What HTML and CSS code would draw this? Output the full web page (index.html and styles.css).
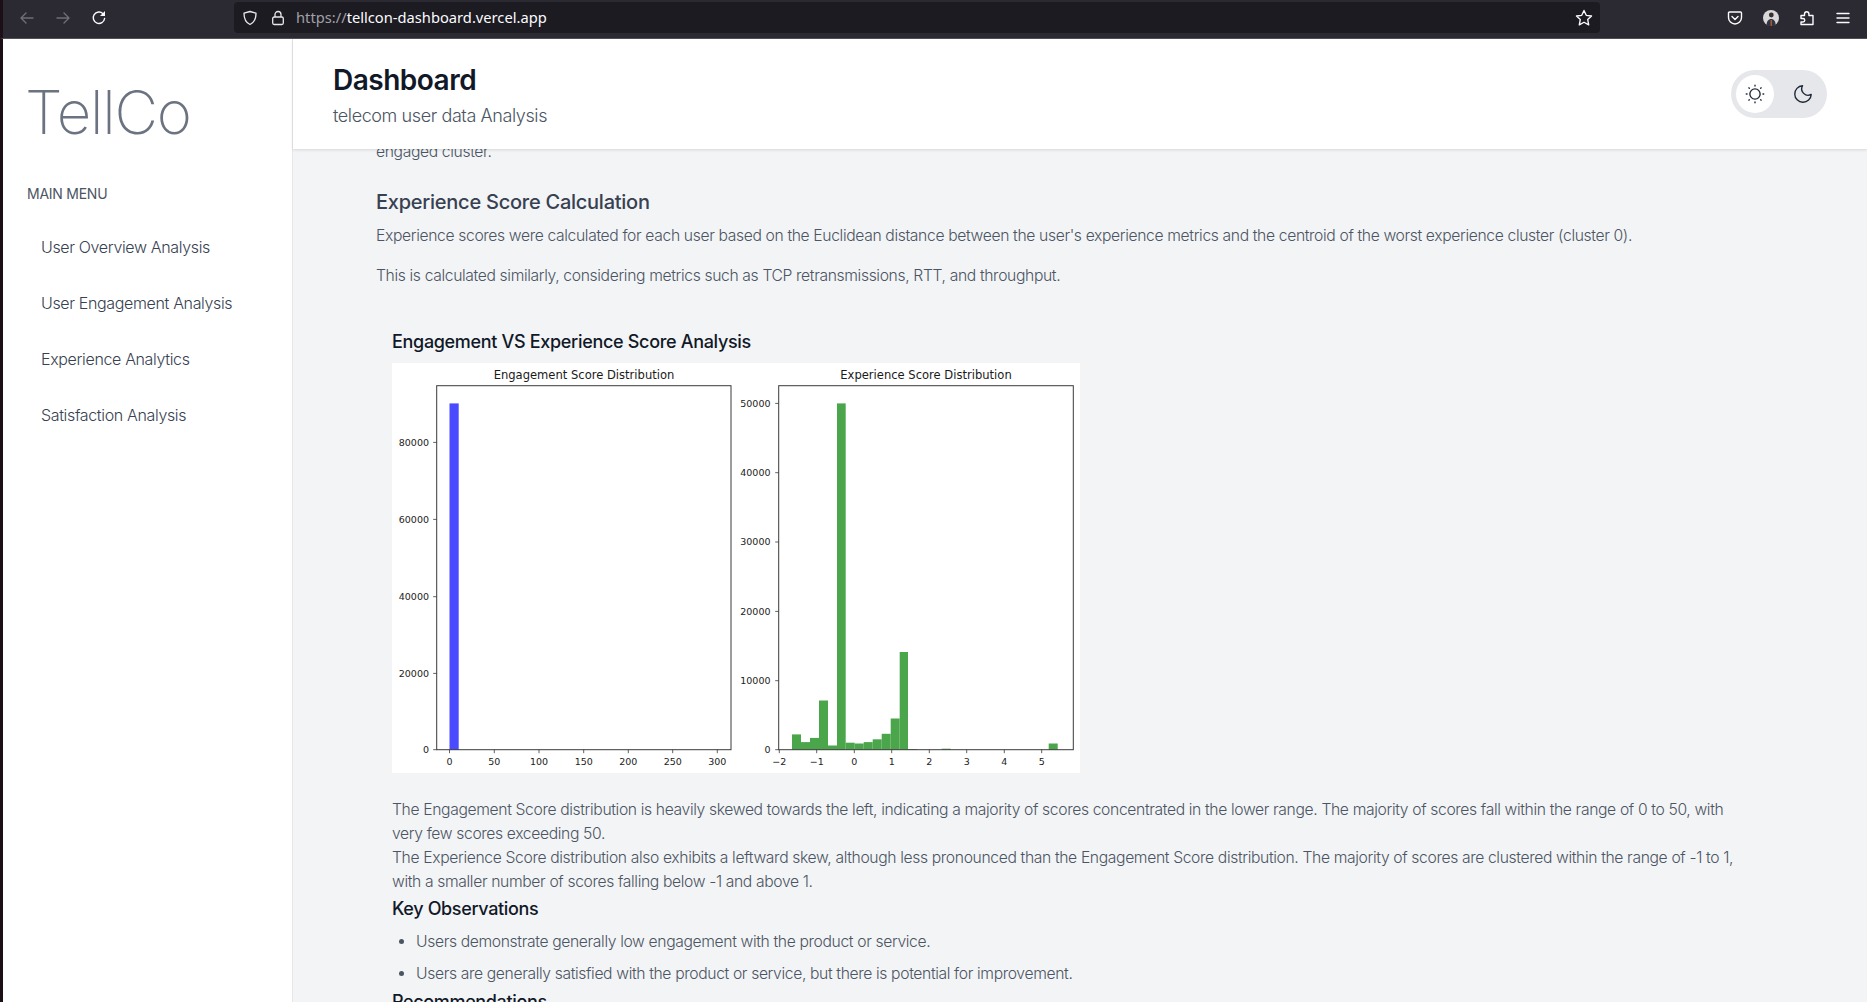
FILE: index.html
```html
<!DOCTYPE html>
<html lang="en">
<head>
<meta charset="utf-8">
<title>TellCo Dashboard</title>
<link rel="stylesheet" href="styles.css">
</head>
<body>
<div class="toolbar">
  <div class="nav-icons">
    <svg class="tb-icon dim" viewBox="0 0 16 16"><path d="M14 8H2.500M7 3 2 8l5 5"/></svg>
    <svg class="tb-icon dim" viewBox="0 0 16 16"><path d="M2 8h11.500M9 3l5 5-5 5"/></svg>
    <svg class="tb-icon" viewBox="0 0 16 16"><path d="M13.600 8.500A5.700 5.700 0 1 1 12 3.700"/><path class="solid" d="M14 1v5H9z"/></svg>
  </div>
  <div class="urlbar">
    <svg class="url-icon" viewBox="0 0 16 16"><path d="M8 1.500 14 3.200c0 5.500-1.600 9.300-6 11.300C3.600 12.500 2 8.700 2 3.200z"/></svg>
    <svg class="url-icon" viewBox="0 0 16 16"><rect x="2.700" y="7" width="10.600" height="7.500" rx="1.500"/><path d="M5 7V4.500a3 3 0 0 1 6 0V7"/></svg>
    <span class="url"><span class="url-dim">https://</span>tellcon-dashboard.vercel.app</span>
    <svg class="star" viewBox="0 0 16 16"><path d="m8 1.300 2 4.300 4.700.6-3.400 3.200.9 4.700L8 11.800l-4.200 2.300.9-4.700-3.400-3.200 4.700-.6z"/></svg>
  </div>
  <div class="tb-right">
    <svg class="tb-icon" viewBox="0 0 16 16"><path d="M2.500 2h11c.6 0 1 .4 1 1v4.500a6.500 6.500 0 0 1-13 0V3c0-.6.4-1 1-1z"/><path d="m5 6.500 3 3 3-3"/></svg>
    <svg class="avatar" viewBox="0 0 16 16"><circle cx="8" cy="8" r="8" fill="#d8d8da"/><circle cx="8.300" cy="5" r="2.400" fill="#3b2d2a"/><path d="M3.500 16c0-5 2-7 4.700-7s4.500 2 4.500 7z" fill="#2f3640"/><path d="M7.500 10h1.500v6H7.500z" fill="#a8553c"/></svg>
    <svg class="tb-icon" viewBox="0 0 16 16"><path d="M2 5.500h3.500V4a2.200 2.200 0 0 1 4.400 0v1.500H14V14.500H2V12h2a1.700 1.700 0 0 0 0-3.500H2z"/></svg>
    <svg class="tb-icon" viewBox="0 0 16 16"><path d="M2 3.500h12M2 8h12M2 12.500h12"/></svg>
  </div>
</div>

<div class="app">
  <aside class="sidebar">
    <div class="logo">TellCo</div>
    <div class="menu-label">MAIN MENU</div>
    <nav class="menu">
      <a class="menu-item">User Overview Analysis</a>
      <a class="menu-item">User Engagement Analysis</a>
      <a class="menu-item">Experience Analytics</a>
      <a class="menu-item">Satisfaction Analysis</a>
    </nav>
  </aside>

  <main class="main">
    <header class="header">
      <div>
        <h1 class="title">Dashboard</h1>
        <p class="subtitle">telecom user data Analysis</p>
      </div>
      <div class="theme-toggle">
        <span class="theme-btn active">
          <svg class="theme-icon" viewBox="0 0 24 24"><circle cx="12" cy="12" r="5.600"/><path class="rays" d="M12 2.500v.8M12 20.700v.8M2.500 12h.8M20.700 12h.8M5.300 5.300l.5.5M18.200 18.200l.5.5M5.300 18.700l.5-.5M18.200 5.800l.5-.5"/></svg>
        </span>
        <span class="theme-btn">
          <svg class="theme-icon" viewBox="0 0 24 24"><path d="M11.500 3a7 7 0 0 0 9.500 9.500A9 9 0 1 1 11.500 3z"/></svg>
        </span>
      </div>
    </header>

    <div class="content">
      <p class="clipped">engaged cluster.</p>
      <h2 class="section-title">Experience Score Calculation</h2>
      <p class="para">Experience scores were calculated for each user based on the Euclidean distance between the user's experience metrics and the centroid of the worst experience cluster (cluster 0).</p>
      <p class="para">This is calculated similarly, considering metrics such as TCP retransmissions, RTT, and throughput.</p>

      <section class="analysis">
        <h3 class="analysis-title">Engagement VS Experience Score Analysis</h3>
        <svg class="chart" viewBox="0 -0.700 688 410" width="688" height="410">
          <rect class="plot-bg" y="-1" width="688" height="412"/>
          <text class="chart-title" x="192" y="15.500">Engagement Score Distribution</text>
          <text class="chart-title" x="534" y="15.500">Experience Score Distribution</text>

          <rect class="bar-blue" x="57.500" y="39.700" width="9.200" height="346.300"/>

          <g class="bars-green">
            <rect x="400" y="370.700" width="9" height="15.300"/>
            <rect x="409" y="378.400" width="9" height="7.600"/>
            <rect x="418" y="374.200" width="9" height="11.800"/>
            <rect x="427" y="336.800" width="9" height="49.200"/>
            <rect x="436" y="381.800" width="9" height="4.200"/>
            <rect x="445" y="39.700" width="8.700" height="346.300"/>
            <rect x="453.700" y="379" width="9" height="7"/>
            <rect x="462.700" y="379.800" width="9" height="6.200"/>
            <rect x="471.700" y="378.400" width="9" height="7.600"/>
            <rect x="480.700" y="375.600" width="9" height="10.400"/>
            <rect x="489.700" y="370.100" width="9" height="15.900"/>
            <rect x="498.700" y="354.800" width="9" height="31.200"/>
            <rect x="507.700" y="288.300" width="8.300" height="97.700"/>
            <rect x="516" y="385.300" width="9" height="0.700"/>
            <rect x="549.700" y="385" width="9" height="1"/>
            <rect x="656.700" y="379.800" width="9" height="6.200"/>
          </g>

          <rect class="axes" x="44.700" y="22" width="294.300" height="364"/>
          <rect class="axes" x="386.700" y="22" width="294.600" height="364"/>

          <path class="ticks" d="M41.200 78.700h3.500M41.200 155.700h3.500M41.200 233h3.500M41.200 309.700h3.500M41.200 386h3.500M57.500 386v3.500M102.300 386v3.500M147 386v3.500M191.700 386v3.500M236.300 386v3.500M280.700 386v3.500M325.300 386v3.500"/>
          <path class="ticks" d="M383.200 39.700h3.500M383.200 109h3.500M383.200 178.300h3.500M383.200 247.700h3.500M383.200 317h3.500M383.200 386h3.500M387.300 386v3.500M424.700 386v3.500M462.300 386v3.500M499.700 386v3.500M537.300 386v3.500M574.700 386v3.500M612.300 386v3.500M649.700 386v3.500"/>

          <g class="labels-y">
            <text x="37" y="82">80000</text>
            <text x="37" y="159">60000</text>
            <text x="37" y="236.300">40000</text>
            <text x="37" y="313">20000</text>
            <text x="37" y="389.300">0</text>
            <text x="378.500" y="43">50000</text>
            <text x="378.500" y="112.300">40000</text>
            <text x="378.500" y="181.600">30000</text>
            <text x="378.500" y="251">20000</text>
            <text x="378.500" y="320.300">10000</text>
            <text x="378.500" y="389.300">0</text>
          </g>
          <g class="labels-x">
            <text x="57.500" y="401">0</text>
            <text x="102.300" y="401">50</text>
            <text x="147" y="401">100</text>
            <text x="191.700" y="401">150</text>
            <text x="236.300" y="401">200</text>
            <text x="280.700" y="401">250</text>
            <text x="325.300" y="401">300</text>
            <text x="387.300" y="401">−2</text>
            <text x="424.700" y="401">−1</text>
            <text x="462.300" y="401">0</text>
            <text x="499.700" y="401">1</text>
            <text x="537.300" y="401">2</text>
            <text x="574.700" y="401">3</text>
            <text x="612.300" y="401">4</text>
            <text x="649.700" y="401">5</text>
          </g>
        </svg>
        <p class="summary">The Engagement Score distribution is heavily skewed towards the left, indicating a majority of scores concentrated in the lower range. The majority of scores fall within the range of 0 to 50, with very few scores exceeding 50.<br>The Experience Score distribution also exhibits a leftward skew, although less pronounced than the Engagement Score distribution. The majority of scores are clustered within the range of -1 to 1, with a smaller number of scores falling below -1 and above 1.</p>
        <h4 class="sub-title">Key Observations</h4>
        <ul class="list">
          <li>Users demonstrate generally low engagement with the product or service.</li>
          <li>Users are generally satisfied with the product or service, but there is potential for improvement.</li>
        </ul>
        <h4 class="sub-title rec">Recommendations</h4>
      </section>
    </div>
  </main>
</div>
</body>
</html>
```

FILE: styles.css
```css
* { box-sizing: border-box; }
html, body { margin: 0; height: 100%; overflow: hidden; }
body {
  display: flex;
  flex-direction: column;
  height: 1002px;
  font-family: "Inter", "Liberation Sans", sans-serif;
  background: #fff;
}

/* Browser toolbar */
.toolbar {
  height: 39px;
  flex: none;
  display: flex;
  align-items: flex-start;
  background: #2b2a33;
  border-bottom: 1px solid #52515a;
  border-left: 3px solid #1c1016;
}
.nav-icons { display: flex; gap: 20px; padding: 10px 0 0 16px; width: 231px; }
.tb-icon { width: 16px; height: 16px; fill: none; stroke: #fbfbfe; stroke-width: 1.400; stroke-linecap: round; stroke-linejoin: round; }
.tb-icon.dim { stroke: #6f6e76; }
.solid { fill: #fbfbfe; stroke: none; }
.urlbar {
  width: 1366px;
  height: 31px;
  margin-top: 2px;
  display: flex;
  align-items: center;
  background: #1c1b22;
  border-radius: 4px;
  padding-left: 8px;
  color: #fbfbfe;
  font-family: "Noto Sans", "Open Sans", sans-serif;
  font-size: 14.700px;
}
.url-icon { width: 16px; height: 16px; margin-right: 12px; fill: none; stroke: #e8e8ec; stroke-width: 1.300; stroke-linejoin: round; flex: none; }
.url-icon + .url-icon { margin-right: 10px; }
.url { flex: 1; line-height: 29px; padding-bottom: 1px; }
.url-dim { color: #a0a0a6; }
.star { width: 18px; height: 18px; margin-right: 7px; fill: none; stroke: #fbfbfe; stroke-width: 1.200; stroke-linejoin: round; }
.tb-right { display: flex; align-items: center; gap: 20px; padding: 10px 0 0 127px; }
.avatar { width: 16px; height: 16px; }

/* Page layout */
.app {
  flex: 1;
  min-height: 0;
  display: flex;
  border-left: 3px solid #1c1016;
}
.sidebar {
  width: 290px;
  flex: none;
  background: #fff;
  border-right: 1px solid #e5e7eb;
  padding: 37px 0 0 24px;
}
.logo {
  font-size: 60px;
  line-height: 72px;
  font-weight: 250;
  color: #6b7280;
  letter-spacing: -1.200px;
  margin-left: -2px;
}
.menu-label { margin-top: 36px; font-size: 14px; line-height: 20px; color: #4b5563; font-weight: 400; letter-spacing: -0.25px; }
.menu { display: flex; flex-direction: column; margin-top: 15px; }
.menu-item {
  height: 56px;
  display: flex;
  align-items: center;
  padding-left: 14px;
  font-size: 16px;
  font-weight: 300;
  color: #374151;
  letter-spacing: -0.35px;
}

.main { flex: 1; min-width: 0; display: flex; flex-direction: column; background: #f3f4f6; }
.header {
  height: 110px;
  flex: none;
  display: flex;
  justify-content: space-between;
  align-items: center;
  padding: 0 40px 0 40px;
  background: #fff;
  box-shadow: 0 1px 3px rgba(0, 0, 0, 0.12);
  position: relative;
  z-index: 1;
}
.title { margin: 4px 0 0; font-size: 28px; line-height: 34px; font-weight: 600; color: #111827; letter-spacing: -0.5px; }
.subtitle { margin: 6px 0 0; font-size: 18px; line-height: 26px; font-weight: 300; color: #4b5563; letter-spacing: -0.4px; }
.theme-toggle {
  width: 96px;
  height: 48px;
  display: flex;
  align-items: center;
  padding: 0 5px;
  gap: 10px;
  background: #e5e7eb;
  border-radius: 24px;
  margin-top: -1px;
}
.theme-btn { width: 38px; height: 38px; border-radius: 50%; display: flex; align-items: center; justify-content: center; }
.theme-btn.active { background: #fff; }
.theme-icon { width: 22px; height: 22px; fill: none; stroke: #1f2937; stroke-width: 1.500; stroke-linecap: round; stroke-linejoin: round; }

.content { flex: 1; min-height: 0; overflow: hidden; padding-left: 83px; padding-right: 117px; }
.clipped, .para, .summary, .list { font-size: 15.700px; line-height: 24px; font-weight: 300; color: #4b5563; letter-spacing: -0.365px; }
.clipped { margin: -9px 0 0; }
.section-title { margin: 24px 0 0; font-size: 20px; line-height: 28px; font-weight: 500; color: #374151; letter-spacing: -0.25px; }
.para { margin: 8px 0 0; }
.para + .para { margin-top: 16px; }

.analysis { margin-top: 40px; padding-left: 16px; }
.analysis-title { margin: 0; font-size: 18px; line-height: 28px; font-weight: 500; color: #111827; letter-spacing: -0.32px; }
.chart { display: block; margin-top: 7px; }
.plot-bg { fill: #fff; }
.axes { fill: none; stroke: #3a3a3a; stroke-width: 1; }
.ticks { fill: none; stroke: #3a3a3a; stroke-width: 0.800; }
.bar-blue { fill: #4a4aff; }
.bars-green rect { fill: #4ba64b; }
.chart-title { font-family: "DejaVu Sans", sans-serif; font-size: 11.550px; fill: #1a1a1a; text-anchor: middle; }
.labels-y text, .labels-x text { font-family: "DejaVu Sans", sans-serif; font-size: 9.500px; fill: #222; }
.labels-y text { text-anchor: end; }
.labels-x text { text-anchor: middle; }
.summary { margin: 25px 0 0; }
.sub-title { margin: 2px 0 0; font-size: 18px; line-height: 26px; font-weight: 500; color: #111827; letter-spacing: -0.35px; }
.list { margin: 8px 0 0; padding: 0 0 0 24px; }
.list li { margin-bottom: 8px; }
.sub-title.rec { margin-top: -5px; }
```
